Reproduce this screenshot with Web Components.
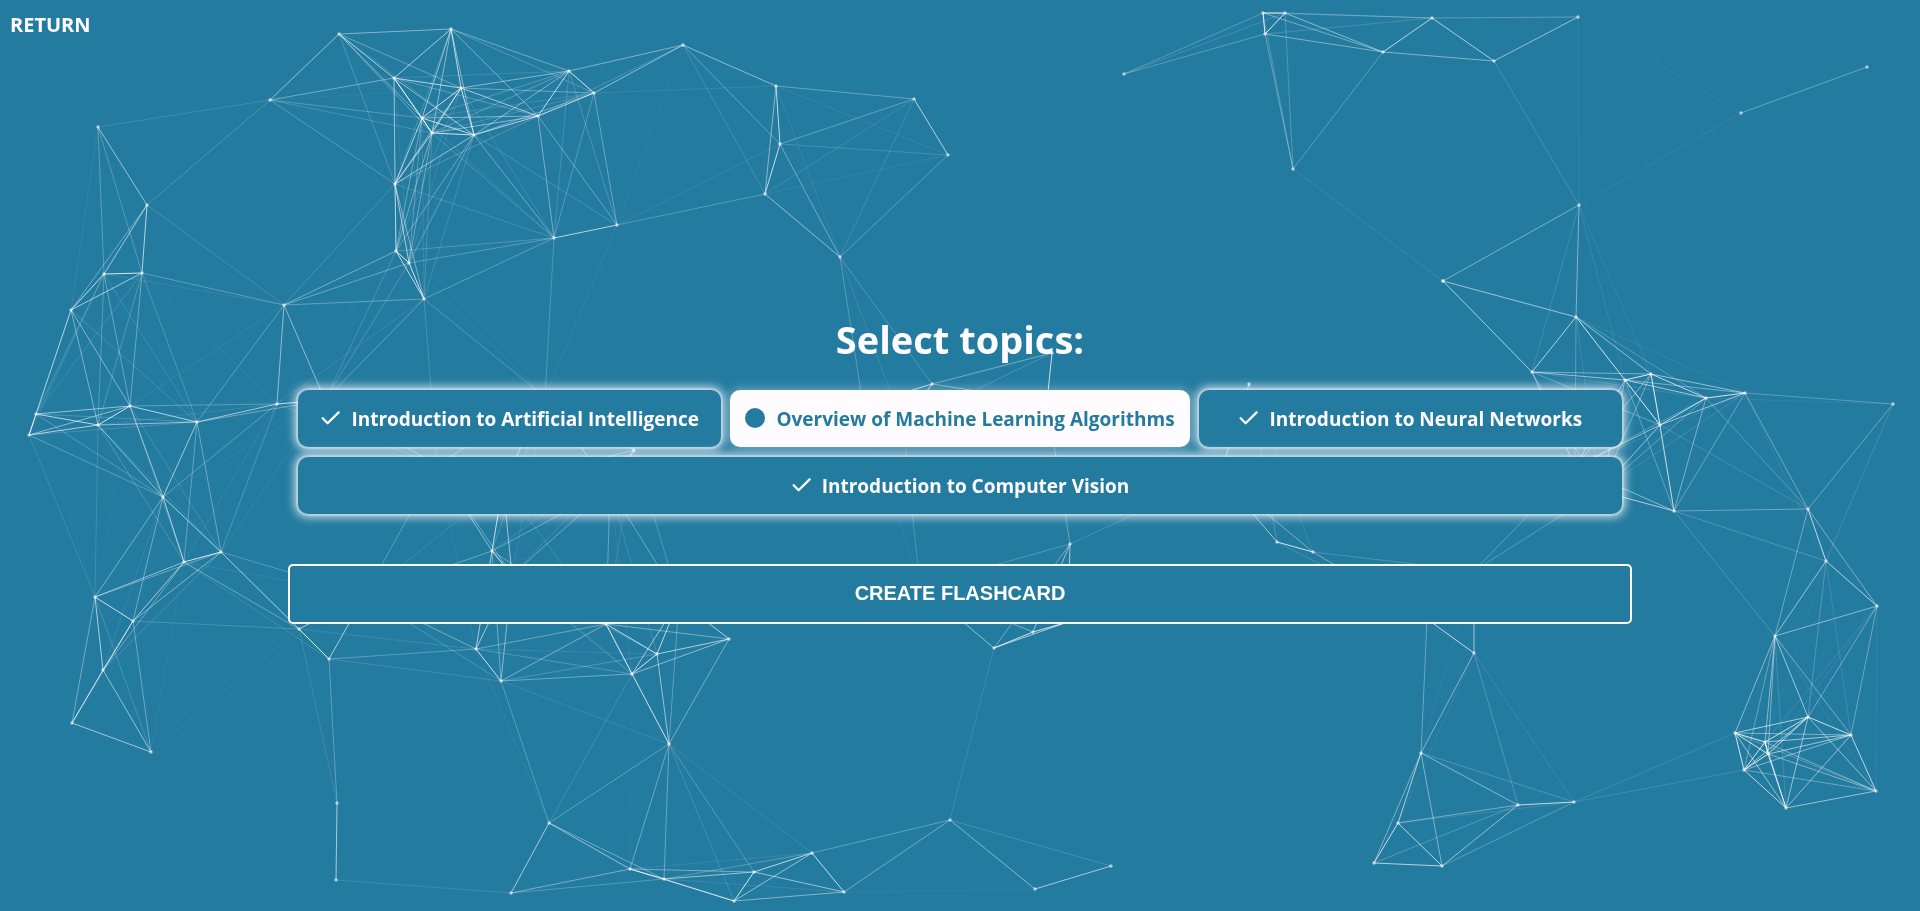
<!DOCTYPE html>
<html lang="en">
<head>
<meta charset="utf-8">
<title>Select topics</title>
<style>
html, body { margin: 0; min-height: 100%; }
body { background: #247ba0; color: #fffcff; font: bold 19px/27px "Open Sans", "Noto Sans", sans-serif; }
</style>
</head>
<body>
<topic-page>
  <particle-net slot="backdrop"></particle-net>
  <return-link slot="nav" href="#">RETURN</return-link>
  <span slot="title">Select topics:</span>
  <topic-option slot="topics" checked>Introduction to Artificial Intelligence</topic-option>
  <topic-option slot="topics">Overview of Machine Learning Algorithms</topic-option>
  <topic-option slot="topics" checked>Introduction to Neural Networks</topic-option>
  <topic-option slot="topics" checked>Introduction to Computer Vision</topic-option>
  <create-button slot="action">CREATE FLASHCARD</create-button>
</topic-page>
<script>
const shadow = (host, html) => {
  host.attachShadow({ mode: "open" }).innerHTML = html;
  return host.shadowRoot;
};

customElements.define("particle-net", class extends HTMLElement {
  static nodes = [
    [98,127],[147,205],[104,274],[142,273],[270,100],[339,34],[451,29],[394,78],[461,88],[422,118],[432,133],[474,135],
    [395,184],[396,251],[409,263],[424,299],[569,71],[594,93],[538,116],[683,45],[776,86],[780,144],[765,194],[914,99],
    [948,155],[840,257],[554,238],[617,225],[71,310],[284,305],[36,414],[29,435],[98,425],[130,406],[197,422],[277,404],
    [163,497],[184,562],[221,552],[95,597],[133,621],[103,670],[72,723],[151,752],[299,629],[329,659],[337,803],[492,551],
    [476,649],[501,681],[606,624],[657,654],[632,674],[729,639],[669,744],[549,823],[511,893],[336,880],[630,869],[664,879],
    [754,872],[734,901],[812,853],[844,892],[950,820],[1035,889],[1111,866],[994,648],[1033,632],[1070,544],[932,384],
    [1052,353],[1249,384],[1277,542],[1313,552],[1579,205],[1443,281],[1443,281],[1576,317],[1532,372],[1625,380],[1651,374],
    [1706,398],[1745,393],[1660,425],[1674,511],[1893,404],[1808,509],[1826,561],[1877,606],[1775,636],[1474,653],
    [1421,753],[1398,823],[1374,863],[1442,866],[1518,805],[1574,802],[1735,733],[1808,717],[1851,735],[1765,742],
    [1768,754],[1744,770],[1786,808],[1876,791],[1124,74],[1263,13],[1285,13],[1265,34],[1432,18],[1383,52],[1494,61],
    [1578,17],[1293,169],[1741,113],[1867,67],[325,400],[545,397],[437,465],[610,488],[503,484],[634,450],[512,575],
    [679,600],[365,595],[1427,619],[1474,571],[1575,467],[1600,491],[1220,475],[1047,402],[1068,622],[920,586],[863,405],[903,425]
  ];
  static reach = 200;
  connectedCallback() {
    const { nodes, reach } = this.constructor;
    let lines = "";
    nodes.forEach(([x1, y1], i) => nodes.slice(i + 1).forEach(([x2, y2]) => {
      const opacity = 1 - Math.hypot(x2 - x1, y2 - y1) / reach;
      if (opacity > 0) lines += `<line x1="${x1}" y1="${y1}" x2="${x2}" y2="${y2}" stroke-opacity="${opacity.toFixed(3)}"/>`;
    }));
    const dots = nodes.map(([x, y]) => `<circle cx="${x}" cy="${y}" r="1.7"/>`).join("");
    shadow(this, `<style>
      :host { display: block; position: fixed; inset: 0; pointer-events: none; }
      svg { display: block; width: 100%; height: 100%; }
    </style>
    <svg viewBox="0 0 1920 911" preserveAspectRatio="xMidYMid slice" aria-hidden="true">
      <g stroke="#fff">${lines}</g><g fill="#fff" fill-opacity="0.6">${dots}</g>
    </svg>`);
  }
});

customElements.define("return-link", class extends HTMLElement {
  connectedCallback() {
    shadow(this, `<style>
      :host { display: block; font-size: 20px; }
      a { color: inherit; text-decoration: none; }
    </style><a href="${this.getAttribute("href")}"><slot></slot></a>`);
  }
});

customElements.define("topic-option", class extends HTMLElement {
  connectedCallback() {
    shadow(this, `<style>
      :host { display: block; flex: 1 1 380px; }
      label {
        display: flex; align-items: center; justify-content: center; gap: 11px;
        padding: 15px; border-radius: 10px; white-space: nowrap; cursor: pointer;
        background: #fffcff; color: #247ba0; box-shadow: 0 0 10px 2px rgb(255 252 255 / 30%);
      }
      label:has(:checked) {
        background: #247ba0; color: #fffcff;
        box-shadow: 0 0 0 2px rgb(255 252 255 / 25%), 0 0 10px 3px rgb(255 252 255 / 80%);
      }
      .mark { position: relative; width: 20px; height: 20px; }
      .text { padding-top: 2px; line-height: 25px; }
      input { position: absolute; inset: 0; width: 100%; height: 100%; margin: 0; opacity: 0; cursor: pointer; }
      svg { display: block; width: 20px; height: 20px; }
      .tick { display: none; fill: none; stroke: currentColor; stroke-width: 2.3; stroke-linecap: round; stroke-linejoin: round; }
      .dot { fill: currentColor; }
      :checked ~ svg .tick { display: inline; }
      :checked ~ svg .dot { display: none; }
    </style>
    <label>
      <span class="mark">
        <input type="checkbox" ${this.hasAttribute("checked") ? "checked" : ""}>
        <svg viewBox="0 0 20 20" aria-hidden="true"><circle class="dot" cx="10" cy="10" r="10"/><path class="tick" d="M2.7 10.3 7.6 15.2 18.6 4.4"/></svg>
      </span>
      <span class="text"><slot></slot></span>
    </label>`);
  }
});

customElements.define("create-button", class extends HTMLElement {
  connectedCallback() {
    shadow(this, `<style>
      :host { display: block; }
      button {
        display: block; width: 100%; height: 60px; border: 2px solid #fff; border-radius: 5px;
        background: #247ba0; color: #fff; font: bold 20px "Liberation Sans", Arial, sans-serif; cursor: pointer;
      }
    </style><button type="button"><slot></slot></button>`);
  }
});

customElements.define("topic-page", class extends HTMLElement {
  connectedCallback() {
    shadow(this, `<style>
      :host { display: flex; flex-direction: column; min-height: 100vh; }
      header { position: relative; padding: 11px 10px 0; }
      main {
        position: relative; flex: 1; display: flex; flex-direction: column; justify-content: center;
        width: 70%; margin: 0 auto; padding-bottom: 14px;
      }
      h1 { margin: 0 0 24px; font-size: 38px; line-height: 54px; text-align: center; }
      .topics { display: flex; flex-wrap: wrap; gap: 10px 9px; padding: 0 10px; margin-bottom: 50px; }
    </style>
    <slot name="backdrop"></slot>
    <header><slot name="nav"></slot></header>
    <main>
      <h1><slot name="title"></slot></h1>
      <div class="topics"><slot name="topics"></slot></div>
      <slot name="action"></slot>
    </main>`);
  }
});
</script>
</body>
</html>
